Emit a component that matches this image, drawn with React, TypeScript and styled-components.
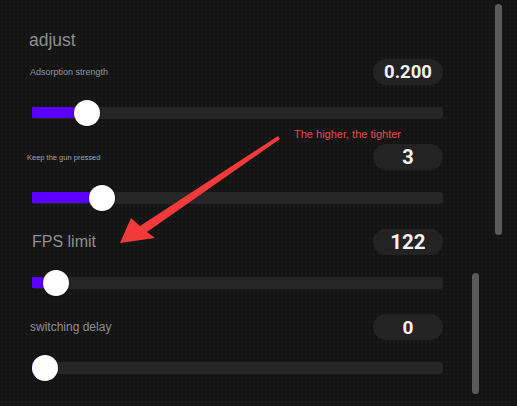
import React from "react";
import styled, { createGlobalStyle } from "styled-components";

const Global = createGlobalStyle`
  html, body { margin: 0; padding: 0; background: #141414; }
  body { font-family: "Liberation Sans", Arial, sans-serif; }
  #root { width: 517px; height: 406px; overflow: hidden; }
`;

const Page = styled.div`
  position: relative;
  width: 517px;
  height: 406px;
  background-color: #141414;
  background-image: radial-gradient(rgba(255,255,255,0.025) 1px, transparent 1px);
  background-size: 4px 4px;
  overflow: hidden;
`;

const Content = styled.div`
  display: flex;
  flex-direction: column;
  gap: 17px;
  padding: 30px 74px 0 32px;
`;

const Title = styled.div`
  height: 20px;
  line-height: 20px;
  font-size: 17.5px;
  color: #8e8e8e;
  margin-left: -3px;
  margin-bottom: -9px;
`;

const Setting = styled.div`
  display: flex;
  flex-direction: column;
  gap: 14px;
`;

const Header = styled.div`
  height: 28px;
  display: flex;
  align-items: center;
  justify-content: space-between;
`;

const Label = styled.span<{ $size: number; $indent: number; $color: string }>`
  font-size: ${(p) => p.$size}px;
  color: ${(p) => p.$color};
  margin-left: ${(p) => p.$indent}px;
  white-space: nowrap;
`;

const ValueBox = styled.div<{ $size: number }>`
  width: 70px;
  height: 26px;
  border-radius: 13px;
  background: #232323;
  display: flex;
  align-items: center;
  justify-content: center;
  font-family: Roboto, "Liberation Sans", sans-serif;
  font-weight: 700;
  font-size: ${(p) => p.$size}px;
  color: #f2f2f2;
`;

const SliderRow = styled.div`
  position: relative;
  height: 26px;
  display: flex;
  align-items: center;
`;

const Track = styled.div`
  position: relative;
  width: 100%;
  height: 12px;
  border-radius: 3px;
  background: #262626;
`;

const Fill = styled.div`
  position: absolute;
  left: 0;
  top: 0;
  height: 11px;
  background: #5a00ff;
  border-radius: 1px;
`;

const Thumb = styled.div`
  position: absolute;
  top: 0;
  width: 26px;
  height: 26px;
  border-radius: 50%;
  background: #ffffff;
  box-shadow: 0 0 2px rgba(0,0,0,0.6);
`;

const ScrollBar = styled.div<{ $left: number; $top: number; $h: number }>`
  position: absolute;
  left: ${(p) => p.$left}px;
  top: ${(p) => p.$top}px;
  width: 7px;
  height: ${(p) => p.$h}px;
  border-radius: 4px;
  background: #5a5a5a;
`;

const Note = styled.div`
  position: absolute;
  left: 294px;
  top: 128px;
  font-size: 11px;
  color: #e8474a;
  white-space: nowrap;
`;

const ArrowSvg = styled.svg`
  position: absolute;
  left: 0;
  top: 0;
  pointer-events: none;
`;

type Item = {
  label: string;
  size: number;
  indent: number;
  color: string;
  value: string;
  valueSize: number;
  thumb: number;
};

const TRACK_LEFT = 32;
const items: Item[] = [
  { label: "Adsorption strength", size: 9, indent: -2, color: "#8f959c", value: "0.200", valueSize: 18.5, thumb: 87 },
  { label: "Keep the gun pressed", size: 7.5, indent: -5, color: "#a3a3a3", value: "3", valueSize: 20, thumb: 102 },
  { label: "FPS limit", size: 16, indent: 0, color: "#8e8e8e", value: "122", valueSize: 20.5, thumb: 56 },
  { label: "switching delay", size: 12, indent: -2, color: "#8e8e8e", value: "0", valueSize: 19, thumb: 44.5 },
];

function Slider({ thumb }: { thumb: number }) {
  const c = thumb - TRACK_LEFT;
  return (
    <SliderRow>
      <Track>
        <Fill style={{ width: Math.max(0, c) }} />
      </Track>
      <Thumb style={{ left: c - 13 }} />
    </SliderRow>
  );
}

export default function App() {
  return (
    <>
      <Global />
      <Page>
        <Content>
          <Title>adjust</Title>
          {items.map((it) => (
            <Setting key={it.label}>
              <Header>
                <Label $size={it.size} $indent={it.indent} $color={it.color}>
                  {it.label}
                </Label>
                <ValueBox $size={it.valueSize}>{it.value}</ValueBox>
              </Header>
              <Slider thumb={it.thumb} />
            </Setting>
          ))}
        </Content>
        <ScrollBar $left={495} $top={4} $h={231} />
        <ScrollBar $left={472} $top={273} $h={121} />
        <Note>The higher, the tighter</Note>
        <ArrowSvg width="517" height="406" viewBox="0 0 517 406">
          <path
            d="M278 136 L280 139 L147 232 L155 238 L120 243 L131 218 L140 226 Z"
            fill="#f23a3a"
          />
        </ArrowSvg>
      </Page>
    </>
  );
}
